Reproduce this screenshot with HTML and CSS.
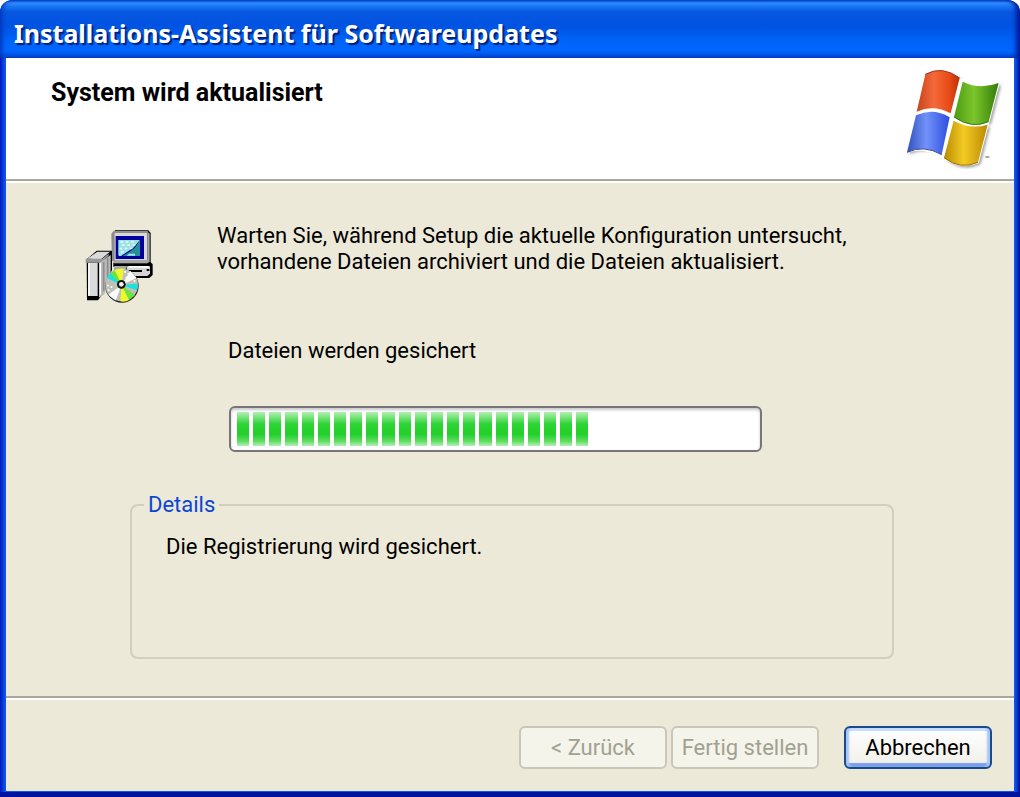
FILE: index.html
```html
<!DOCTYPE html>
<html lang="de">
<head>
<meta charset="utf-8">
<title>Installations-Assistent für Softwareupdates</title>
<link rel="stylesheet" href="styles.css">
</head>
<body>
<div class="window">
  <header class="titlebar"><h1>Installations-Assistent für Softwareupdates</h1></header>
  <div class="client">
    <section class="banner">
      <h2>System wird aktualisiert</h2>
      <svg class="flag" viewBox="45 200 297 306" aria-hidden="true">
        <defs>
          <linearGradient id="red"><stop offset="0" stop-color="#c8431a"/><stop offset=".4" stop-color="#f4693a"/><stop offset=".75" stop-color="#e94c16"/><stop offset="1" stop-color="#bd3108"/></linearGradient>
          <linearGradient id="green"><stop offset="0" stop-color="#4c9c12"/><stop offset=".45" stop-color="#7cc52c"/><stop offset="1" stop-color="#327d08"/></linearGradient>
          <linearGradient id="blue"><stop offset="0" stop-color="#3150bd"/><stop offset=".45" stop-color="#7292fa"/><stop offset="1" stop-color="#2c4de0"/></linearGradient>
          <linearGradient id="gold"><stop offset="0" stop-color="#b98b00"/><stop offset=".45" stop-color="#f3cb24"/><stop offset="1" stop-color="#bb8900"/></linearGradient>
          <filter id="soft" x="-20%" y="-20%" width="140%" height="140%"><feGaussianBlur stdDeviation="4"/></filter>
        </defs>
        <g fill="#9a9a9a" filter="url(#soft)" transform="translate(7 6)">
          <path d="M106 222Q156 194 209 233L182 339Q132 311 80 334Z"/><path d="M218 244Q270 269 326 248L296 364Q245 387 192 350Z"/>
          <path d="M78 345Q130 321 179 351L155 463Q102 432 51 456Z"/><path d="M191 361Q242 389 293 373L264 486Q211 510 162 472Z"/>
        </g>
        <path fill="#fff" d="M98 222Q156 190 213 234Q275 262 330 246L266 489Q211 512 156 472Q100 439 46 459Z"/>
        <path fill="url(#red)" d="M106 222Q156 194 209 233L182 339Q132 311 80 334Z"/>
        <path fill="url(#green)" d="M218 244Q270 269 326 248L296 364Q245 387 192 350Z"/>
        <path fill="url(#blue)" d="M78 345Q130 321 179 351L155 463Q102 432 51 456Z"/>
        <path fill="url(#gold)" d="M191 361Q242 389 293 373L264 486Q211 510 162 472Z"/>
        <g fill="none" stroke-width="3">
          <path stroke="#9f3313" d="M106 222Q156 194 209 233"/><path stroke="#377811" d="M296 364Q245 387 192 350"/>
          <path stroke="#37478e" d="M51 456Q102 432 155 463"/><path stroke="#957006" d="M264 486Q211 510 162 472"/>
        </g>
        <path stroke="#555" stroke-width="3" d="M286 470h12"/>
      </svg>
    </section>
    <main class="content">
      <div class="task">
        <svg class="setup" viewBox="45 43 204 219" aria-hidden="true">
          <path fill="#000" d="M128 50L136 44H235L242 52V140L248 146V178L238 187H170L166 153H130Z"/>
          <path fill="#d8d8d8" d="M124 54L132 47H232V143H132L124 135Z"/>
          <path fill="#a6a6a6" d="M232 48L239 54V138L232 143ZM130 133H233V142H130Z"/>
          <path fill="#8c8c8c" d="M124 54L132 47H234V52H134V135H126Z"/>
          <path fill="#00009c" d="M137 61H222V130H137Z"/>
          <path fill="#9be3e0" d="M145 73H210L190 96 170 110 145 120Z"/>
          <path fill="#fff" opacity=".7" d="M151 76h8v5h-8zM167 76h8v5h-8zM183 76h8v5h-8zM156 86h8v5h-8zM172 86h8v5h-8zM188 86h8v5h-8zM148 96h8v5h-8zM164 96h8v5h-8zM180 96h8v5h-8zM153 106h8v5h-8z"/>
          <path fill="#268f99" d="M210 73V121H158L178 109 194 97Z"/>
          <path fill="#a1e7df" d="M147 112H166L153 121H147ZM176 114H195V120H171Z"/>
          <path fill="#aaa" d="M133 151H169V164H131Z"/>
          <path fill="#d5d5d5" d="M169 152H240V174L232 181H176Z"/>
          <path fill="#fff" d="M175 151H236V156H175Z"/>
          <path fill="#000" d="M176 163H216V169H176ZM230 160H238V166H230Z"/>
          <path fill="#000" d="M50 131L80 105H126V163L91 245 84 254H51Z"/>
          <path fill="#dadada" d="M52 129L82 108H120L93 131ZM54 141H83V241H54Z"/>
          <path fill="#979797" d="M47 129H96L116 114V120L92 141H47Z"/>
          <path fill="#b9b9b9" d="M87 142L122 118V181L103 236 87 246Z"/>
          <path stroke="#fff" stroke-width="4" d="M57 143V240M91 141V237"/>
          <path stroke="#8e8e8e" stroke-width="5" d="M101 139V227M113 127V187"/>
          <circle cx="156" cy="211" r="50" fill="#222"/>
          <circle cx="155" cy="208" r="49" fill="#bfc0b7"/>
          <path fill="#fff" d="M155 208L181 166 199 187ZM155 208L115 237 137 254Z"/>
          <path fill="#eff82d" d="M155 208L133 164Q147 157 161 159ZM155 208L151 257Q167 260 178 253Z"/>
          <path fill="#13e5df" d="M155 208L111 187 122 171ZM155 208L204 204 201 224Z"/>
          <path fill="#69e53d" d="M155 208L121 173 134 164ZM155 208L177 253 195 239Z"/>
          <path fill="#fff" d="M163 166h5v5h-5zM173 172h5v5h-5zM167 183h5v5h-5zM180 182h5v5h-5zM191 193h5v5h-5zM111 207h5v5h-5zM122 212h5v5h-5zM113 221h5v5h-5zM129 226h5v5h-5zM125 237h5v5h-5z"/>
          <circle cx="154" cy="206" r="13" fill="#111"/><circle cx="154" cy="206" r="7" fill="#f5f5ed"/>
        </svg>
        <div class="progress-area">
          <p class="message">Warten Sie, während Setup die aktuelle Konfiguration untersucht,<br>vorhandene Dateien archiviert und die Dateien aktualisiert.</p>
          <p class="status" id="status">Dateien werden gesichert</p>
          <div class="track" role="progressbar" aria-labelledby="status" aria-valuemin="0" aria-valuemax="100" aria-valuenow="68">
            <div class="chunks" style="width:68%"><i></i><i></i><i></i><i></i><i></i><i></i><i></i><i></i><i></i><i></i><i></i><i></i><i></i><i></i><i></i><i></i><i></i><i></i><i></i><i></i><i></i><i></i></div>
          </div>
        </div>
      </div>
      <fieldset class="details">
        <legend>Details</legend>
        <p>Die Registrierung wird gesichert.</p>
      </fieldset>
    </main>
    <footer class="actions">
      <button type="button" disabled>&lt; Zurück</button>
      <button type="button" disabled>Fertig stellen</button>
      <button type="button" class="primary">Abbrechen</button>
    </footer>
  </div>
</div>
</body>
</html>
```
FILE: styles.css
```css
* { box-sizing: border-box; }
body {
  margin: 0;
  background: #fff;
  color: #000;
  font: 22px/26px Roboto, "Liberation Sans", sans-serif;
}
h1, h2, p { margin: 0; }
.window {
  display: flex;
  flex-direction: column;
  min-height: 100vh;
  padding: 0 6px 6px;
  border-radius: 12px 12px 0 0;
  background: linear-gradient(90deg, #0018b8, #0c55ee 5px, #0c55ee calc(100% - 5px), #000c94);
  box-shadow: inset 0 -5px #0012a0;
  overflow: hidden;
}
.titlebar {
  display: flex;
  align-items: center;
  height: 58px;
  margin: 0 -6px;
  padding: 8px 14px 0;
  border-radius: 12px 12px 0 0;
  background: linear-gradient(#0046d0 0, #2f8dfc 3px, #1672f4 7px, #0757df 12px, #0053e2 26px, #0064fa 42px, #0066ff 51px, #0045cf 58px);
  box-shadow: inset 5px 0 5px -3px #0032b8, inset -6px 0 5px -2px #001a9e;
}
.titlebar h1 {
  color: #fff;
  font: bold 25px/32px "Noto Sans", sans-serif;
  text-shadow: 2px 2px 1px #00217e;
}
.client {
  display: flex;
  flex: 1;
  flex-direction: column;
  background: #ece9d8;
}
.banner {
  display: flex;
  justify-content: space-between;
  height: 123px;
  padding: 9px 10px 0 45px;
  border-bottom: 2px solid #aaa89c;
  background: #fff;
}
.banner h2 {
  padding-top: 12px;
  font: bold 25px/28px Roboto, sans-serif;
}
.flag { width: 99px; height: 102px; }
.content {
  flex: 1;
  padding: 40px 120px 0 124px;
  border-top: 2px solid #fff;
}
.task { display: flex; margin-left: -45px; }
.setup { flex: none; width: 68px; height: 73px; margin-top: 7px; }
.progress-area { flex: 1; min-width: 0; padding: 0 132px 0 64px; }
.message { white-space: nowrap; }
.status { padding: 63px 0 0 11px; }
.track {
  height: 46px;
  margin: 42px 0 0 12px;
  padding: 4px 6px;
  border: 2px solid #77757a;
  border-radius: 6px;
  background: #fff;
  box-shadow: inset 0 2px 3px #c8c8c8;
}
.chunks { display: flex; gap: 4px; height: 34px; }
.chunks i {
  flex: 1;
  background: linear-gradient(#b4efb4, #2fd436 35%, #22cf2a 65%, #5bdc60 85%, #b4efb4);
}
.details {
  min-width: 0;
  min-height: 167px;
  margin: 40px 0 0;
  padding: 16px 34px;
  border: 2px solid #d0cfbf;
  border-radius: 8px;
}
.details legend {
  margin-left: -22px;
  padding: 0 4px;
  color: #0a46d5;
}
.actions {
  display: flex;
  gap: 4px;
  justify-content: flex-end;
  margin-top: 36px;
  padding: 28px 22px 22px;
  border-top: 2px solid #aaa89c;
  box-shadow: inset 0 2px #fff;
}
button {
  width: 148px;
  height: 43px;
  padding: 0;
  border: 2px solid #003c74;
  border-radius: 6px;
  background: linear-gradient(#fff, #f0efe8);
  color: #000;
  font: inherit;
}
button:disabled { border-color: #c9c7ba; background: #f5f4ea; color: #a1a192; }
.primary {
  margin-left: 21px;
  border-color: #164b8c;
  box-shadow: inset 4px 0 2px -1px #a9c5f5, inset -4px 0 2px -1px #a9c5f5, inset 0 3px 1px #c7dcff, inset 0 -4px 1px #7b9fe8;
}
```
